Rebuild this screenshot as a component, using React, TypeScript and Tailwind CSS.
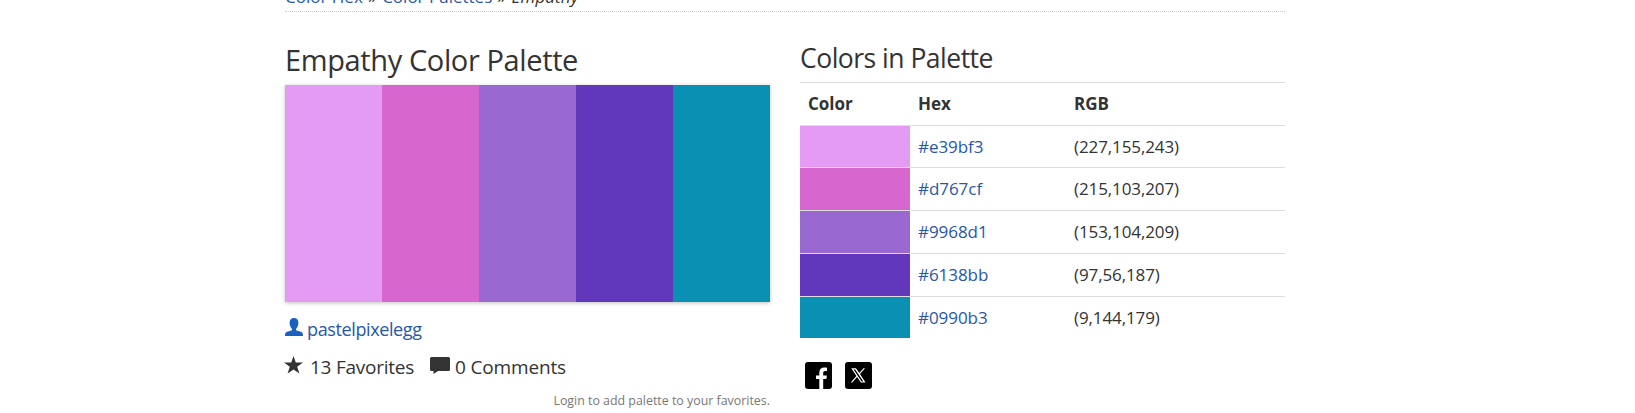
const colors = [
  { hex: "#e39bf3", rgb: "(227,155,243)", bg: "bg-[#e39bf3]", height: "h-[41px]" },
  { hex: "#d767cf", rgb: "(215,103,207)", bg: "bg-[#d767cf]", height: "h-[42px]" },
  { hex: "#9968d1", rgb: "(153,104,209)", bg: "bg-[#9968d1]", height: "h-[42px]" },
  { hex: "#6138bb", rgb: "(97,56,187)", bg: "bg-[#6138bb]", height: "h-[42px]" },
  { hex: "#0990b3", rgb: "(9,144,179)", bg: "bg-[#0990b3]", height: "h-[41px]" },
];

function UserIcon() {
  return (
    <svg className="mt-[2px] -ml-[0.5px] h-[18px] w-[18px] shrink-0 fill-[#1861bf]" viewBox="0 0 18 18">
      <path d="M9 0C6.2 0 4.600 1.900 4.600 4.800c0 2.600 1 4.900 2.400 6.100v1.300L1.600 14C.5 14.500 0 15.500 0 18h18c0-2.500-.5-3.500-1.600-4l-5.400-1.800v-1.300c1.400-1.200 2.400-3.500 2.400-6.100C13.400 1.900 11.800 0 9 0z" />
    </svg>
  );
}

function StarIcon() {
  return (
    <svg className="mt-[3px] -ml-px h-[18px] w-[19px] shrink-0 fill-[#333]" viewBox="0 0 19 18">
      <path d="M9.500 0l2.300 6.600H19l-5.800 4.100 2.200 6.900-5.900-4.200-5.900 4.200 2.200-6.900L0 6.600h7.200z" />
    </svg>
  );
}

function CommentIcon() {
  return (
    <svg className="mt-[4px] h-[17px] w-5 shrink-0 fill-[#333]" viewBox="0 0 20 17">
      <path d="M1.500 0h17Q20 0 20 1.500v11Q20 14 18.500 14H8l-4.500 3v-3h-2Q0 14 0 12.500v-11Q0 0 1.500 0z" />
    </svg>
  );
}

function FacebookIcon() {
  return (
    <svg className="h-[27px] w-[27px]" viewBox="0 0 27 27">
      <rect width="27" height="27" rx="3" />
      <path fill="#fff" d="M14.300 27V17h-3.300v-3.600h3.300v-2.700c0-3.400 2-5.200 5-5.200 1.300 0 2.300.1 2.700.2v3.300h-1.900c-1.500 0-1.900.8-1.900 1.900v2.500h3.700l-.5 3.600h-3.200v10z" />
    </svg>
  );
}

function XIcon() {
  return (
    <svg className="h-[27px] w-[27px]" viewBox="0 0 27 27">
      <rect width="27" height="27" rx="3" />
      <path
        fill="#fff"
        fillRule="evenodd"
        d="M6.300 6.300h4.600l3.400 4.700 4.200-4.700h1.500l-5 5.800 5.500 8.500h-4.600l-3.800-5.500-4.800 5.500H5.800l5.600-6.600zM8.500 7.500l8.100 11.900h1.700L10.200 7.500z"
      />
    </svg>
  );
}

export default function App() {
  return (
    <div className="h-[413px] overflow-hidden bg-white font-['Open_Sans','Noto_Sans',sans-serif] text-[17px] text-[#333]">
      <div className="ml-[285px] w-[1000px]">
        <nav className="-mt-[15px] h-[27px] border-b border-dotted border-[#ccc] leading-6 whitespace-pre">
          <a className="text-[#2758a8]">Color Hex</a>
          <span className="tracking-[0.7px]">{" » "}</span>
          <a className="text-[#2758a8]">Color Palettes</a>
          <span className="tracking-[0.7px]">{" » "}</span>
          <em className="tracking-[0.1px]">Empathy</em>
        </nav>

        <div className="mt-[27px] flex justify-between">
          <section className="w-[485px]">
            <h1 className="mt-px mb-[5px] h-10 text-[29px] leading-10 tracking-[-0.38px]">Empathy Color Palette</h1>
            <div className="flex h-[217px] shadow-[0_1px_4px_rgba(0,0,0,0.25)]">
              {colors.map((c) => (
                <div key={c.hex} className={`flex-1 ${c.bg}`} />
              ))}
            </div>
            <a className="mt-[14px] flex h-[26px] items-start gap-[4.5px] text-[18px] leading-[26px] tracking-[-0.38px] text-[#2758a8]">
              <UserIcon />
              pastelpixelegg
            </a>
            <div className="mt-[11px] flex h-7 items-start text-[19px] leading-7">
              <StarIcon />
              <span className="ml-[7px] w-[120px] tracking-[-0.25px]">13 Favorites</span>
              <CommentIcon />
              <span className="ml-[5px] tracking-[-0.15px]">0 Comments</span>
            </div>
            <p className="mt-[11px] text-right text-[12.4px] leading-[18px] text-[#777]">
              Login to add palette to your favorites.
            </p>
          </section>

          <section className="w-[485px]">
            <h2 className="mt-px mb-[6px] h-9 text-[26.5px] leading-9 tracking-[-0.5px]">Colors in Palette</h2>
            <div className="grid h-[43px] grid-cols-[118px_156px_1fr] items-center border-t border-[#ddd] pl-2 font-bold">
              <span>Color</span>
              <span className="-ml-2">Hex</span>
              <span className="-ml-2">RGB</span>
            </div>
            {colors.map((c) => (
              <div key={c.hex} className="grid grid-cols-[110px_156px_1fr] border-t border-[#ddd]">
                <div className={`${c.height} ${c.bg}`} />
                <a className="self-center pl-2 tracking-[-0.05px] text-[#2758a8]">{c.hex}</a>
                <span className="self-center pl-2 tracking-[-0.1px]">{c.rgb}</span>
              </div>
            ))}
            <div className="mt-6 ml-[4.5px] flex gap-[13px]">
              <FacebookIcon />
              <XIcon />
            </div>
          </section>
        </div>
      </div>
    </div>
  );
}
